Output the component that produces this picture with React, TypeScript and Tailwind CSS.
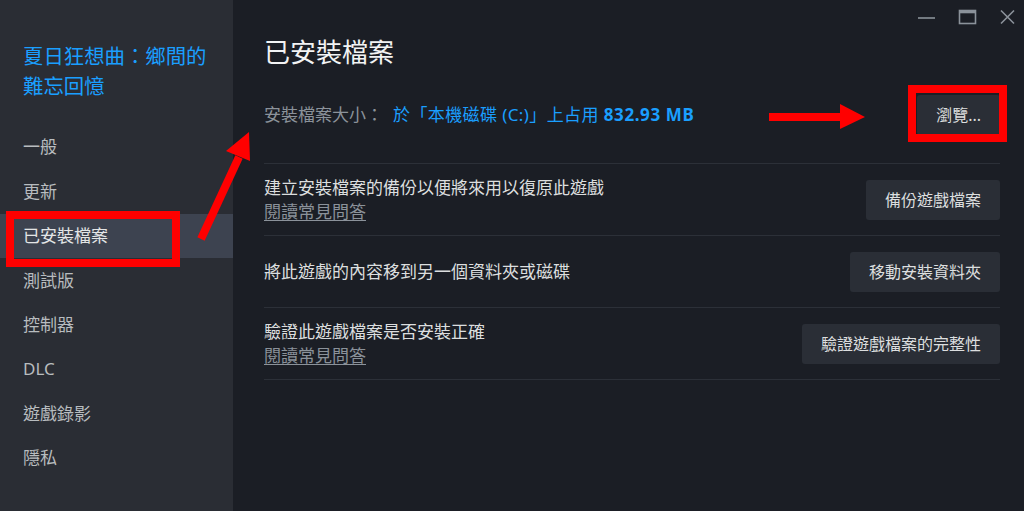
import React from "react"

const FONT = { fontFamily: '"Noto Sans", "Noto Sans CJK TC", sans-serif' }

const menu = ["一般", "更新", "已安裝檔案", "測試版", "控制器", "DLC", "遊戲錄影", "隱私"]

function ActionRow({ text, faq, button }: { text: string; faq?: boolean; button: string }) {
  return (
    <div className="flex h-[72px] items-center justify-between border-t border-[#2c3038]">
      <div className="flex flex-col">
        <span className="text-[17px] leading-[24px] text-[#dcdedf]">{text}</span>
        {faq && (
          <span className="text-[17px] leading-[24px] text-[#8b929a] underline underline-offset-2">閱讀常見問答</span>
        )}
      </div>
      <button className="h-[40px] rounded-[3px] bg-[#2a2e36] px-[19px] text-[16px] text-[#dcdedf]">{button}</button>
    </div>
  )
}

export default function App() {
  return (
    <div className="relative flex h-[511px] w-[1024px] overflow-hidden bg-[#1b1e25]" style={FONT}>
      {/* 側欄 */}
      <aside className="flex w-[233px] shrink-0 flex-col bg-[#2a2d34] pt-[41px]">
        <div className="px-[23px] text-[20.4px] leading-[30px] text-[#1a9fff]">
          夏日狂想曲：鄉間的
          <br />
          難忘回憶
        </div>
        <nav className="mt-[24px] flex flex-col">
          {menu.map((m) => (
            <div
              key={m}
              className={
                m === "已安裝檔案"
                  ? "flex h-[44.4px] items-center bg-[#3d4350] px-[23px] text-[17px] text-[#e3e5e6]"
                  : "flex h-[44.4px] items-center px-[23px] text-[17px] text-[#b8bcbf]"
              }
            >
              {m}
            </div>
          ))}
        </nav>
      </aside>

      {/* 主內容 */}
      <main className="flex flex-1 flex-col">
        <div className="flex h-[34px] items-center justify-end gap-[22px] pr-[8px] text-[#8b929a]">
          <svg width="19" height="16" viewBox="0 0 19 16">
            <line x1="1" y1="9" x2="18" y2="9" stroke="currentColor" strokeWidth="1.6" />
          </svg>
          <svg width="19" height="16" viewBox="0 0 19 16">
            <rect x="1.5" y="1.5" width="16" height="13" fill="none" stroke="currentColor" strokeWidth="1.6" />
            <line x1="1.5" y1="3" x2="17.5" y2="3" stroke="currentColor" strokeWidth="2.6" />
          </svg>
          <svg width="17" height="16" viewBox="0 0 17 16">
            <path d="M2 1.5 L15 14.5 M15 1.5 L2 14.5" stroke="currentColor" strokeWidth="1.6" />
          </svg>
        </div>

        <div className="pl-[31px] pr-[24px]">
          <h1 className="h-[36px] text-[26px] leading-[36px] text-[#f2f3f4]">已安裝檔案</h1>

          <div className="flex h-[93px] items-center justify-between pb-[4px]">
            <div className="text-[17px] text-[#8b929a]">
              安裝檔案大小：
              <span className="ml-[10px] text-[#1a9fff] tracking-[0.4px]">
                於「本機磁碟 (C:)」上占用 <span className="font-bold tracking-[0.6px]">832.93 MB</span>
              </span>
            </div>
            <button className="h-[40px] rounded-[3px] bg-[#2a2e36] px-[19px] text-[16px] text-[#dcdedf]">瀏覽...</button>
          </div>

          <ActionRow text="建立安裝檔案的備份以便將來用以復原此遊戲" faq button="備份遊戲檔案" />
          <ActionRow text="將此遊戲的內容移到另一個資料夾或磁碟" button="移動安裝資料夾" />
          <div className="border-b border-[#2c3038]">
            <ActionRow text="驗證此遊戲檔案是否安裝正確" faq button="驗證遊戲檔案的完整性" />
          </div>
        </div>
      </main>

      {/* 標註：紅框與箭頭 */}
      <div className="pointer-events-none absolute left-[6px] top-[211px] h-[56px] w-[174px] border-[8px] border-[#ff0000]" />
      <div className="pointer-events-none absolute left-[908px] top-[85px] h-[57px] w-[99px] border-[8px] border-[#ff0000]" />
      <svg className="pointer-events-none absolute left-0 top-0" width="1024" height="511" viewBox="0 0 1024 511">
        <line x1="201" y1="239" x2="239" y2="157" stroke="#ff0000" strokeWidth="8" />
        <polygon points="249,132 226,151 250,161" fill="#ff0000" />
        <rect x="769" y="113" width="74" height="8" fill="#ff0000" />
        <polygon points="840,104 865,117 840,129" fill="#ff0000" />
      </svg>
    </div>
  )
}
